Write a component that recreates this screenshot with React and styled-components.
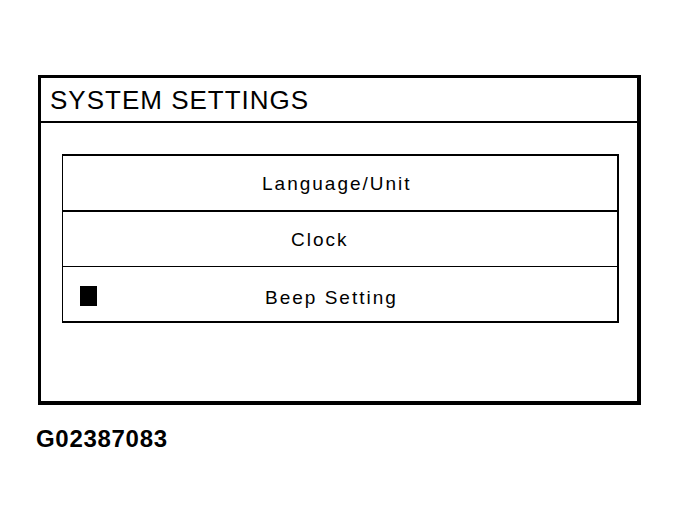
import React from "react";
import styled, { createGlobalStyle } from "styled-components";

const Global = createGlobalStyle`
  html, body { margin: 0; padding: 0; background: #fff; }
  body { font-family: "Liberation Sans", Arial, sans-serif; color: #000; }
  * { box-sizing: border-box; }
`;

const Page = styled.div`
  width: 679px;
  height: 524px;
  padding: 75px 0 0 38px;
  display: flex;
  flex-direction: column;
`;

const Screen = styled.section`
  width: 603px;
  height: 330px;
  border-style: solid;
  border-color: #000;
  border-width: 3px 4px 4px 3px;
  display: flex;
  flex-direction: column;
`;

const Header = styled.header`
  height: 45px;
  border-bottom: 2px solid #000;
  display: flex;
  align-items: center;
  padding-left: 9px;
  font-size: 26px;
  line-height: 26px;
  letter-spacing: 1px;
`;

const Body = styled.div`
  flex: 1;
  padding: 31px 18px 0 21px;
`;

const List = styled.ul`
  list-style: none;
  margin: 0;
  padding: 0;
  border-style: solid;
  border-color: #000;
  border-width: 2px 2px 2px 1px;
`;

const Row = styled.li`
  height: ${(p) => p.$h}px;
  border-bottom: ${(p) => (p.$divider ? `${p.$divider}px solid #000` : "none")};
  display: flex;
  align-items: center;
`;

const Marker = styled.span`
  width: 17px;
  height: 20px;
  margin: 3px 0 0 17px;
  background: #000;
  flex: none;
`;

const Label = styled.span`
  margin-left: ${(p) => p.$indent}px;
  margin-top: ${(p) => (p.$drop || 0) * 2}px;
  font-size: 19px;
  line-height: 19px;
  letter-spacing: 2px;
  white-space: nowrap;
`;

const Caption = styled.div`
  margin: 22px 0 0 -2px;
  font-size: 24px;
  line-height: 24px;
  font-weight: bold;
  letter-spacing: 0.7px;
`;

const items = [
  { label: "Language/Unit", indent: 199, h: 56, divider: 2, drop: 0 },
  { label: "Clock", indent: 228, h: 55, divider: 1, drop: 0 },
  { label: "Beep Setting", indent: 168, h: 54, divider: 0, drop: 3, marker: true },
];

export default function App() {
  return (
    <>
      <Global />
      <Page>
        <Screen>
          <Header>SYSTEM SETTINGS</Header>
          <Body>
            <List>
              {items.map((it) => (
                <Row key={it.label} $h={it.h} $divider={it.divider}>
                  {it.marker && <Marker />}
                  <Label $indent={it.indent} $drop={it.drop}>{it.label}</Label>
                </Row>
              ))}
            </List>
          </Body>
        </Screen>
        <Caption>G02387083</Caption>
      </Page>
    </>
  );
}
